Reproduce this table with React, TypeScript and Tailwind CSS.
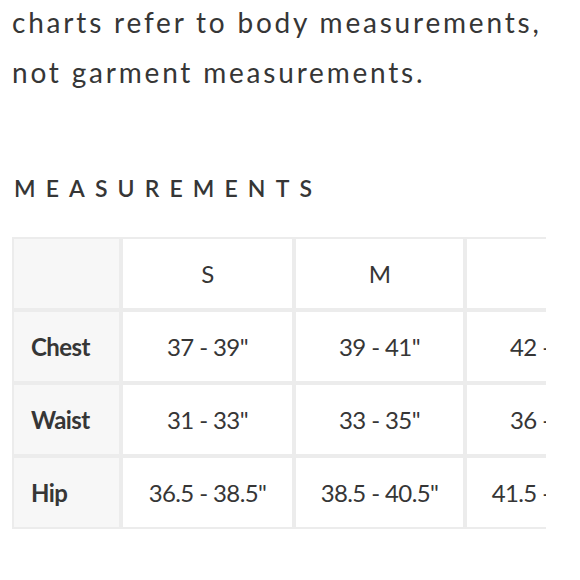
import React from "react";

const rows = [
  { label: "Chest", vals: ['37 - 39"', '39 - 41"', '42 - 44"'] },
  { label: "Waist", vals: ['31 - 33"', '33 - 35"', '36 - 38"'] },
  { label: "Hip", vals: ['36.5 - 38.5"', '38.5 - 40.5"', '41.5 - 43.5"'] },
];

export default function App() {
  return (
    <div
      className="w-[580px] h-[580px] bg-white text-[#363636] pl-3 overflow-hidden"
      style={{ fontFamily: "Lato, 'Noto Sans', sans-serif" }}
    >
      <p className="text-[28px] leading-[50px] tracking-[2.8px] -mt-[3px] whitespace-nowrap">
        charts refer to body measurements,
        <br />
        not garment measurements.
      </p>
      <h2 className="mt-[76px] text-[23px] leading-[30px] tracking-[0.44em] font-semibold pl-[2px]">
        MEASUREMENTS
      </h2>
      <div className="mt-[34px] w-[534px] overflow-hidden">
        <div className="grid grid-cols-[105px_169px_167px_167px] auto-rows-[69px] gap-[4px] p-[2px] bg-[#ececec] w-max text-[24px] tracking-[-0.6px]">
          <div className="bg-[#f7f7f7]" />
          {["S", "M", "L"].map((s) => (
            <div key={s} className="bg-white flex items-center justify-center">
              {s}
            </div>
          ))}
          {rows.map((r) => (
            <React.Fragment key={r.label}>
              <div className="bg-[#f7f7f7] flex items-center pl-[17px] font-bold">
                {r.label}
              </div>
              {r.vals.map((v) => (
                <div key={v} className="bg-white flex items-center justify-center whitespace-nowrap">
                  {v}
                </div>
              ))}
            </React.Fragment>
          ))}
        </div>
      </div>
    </div>
  );
}
